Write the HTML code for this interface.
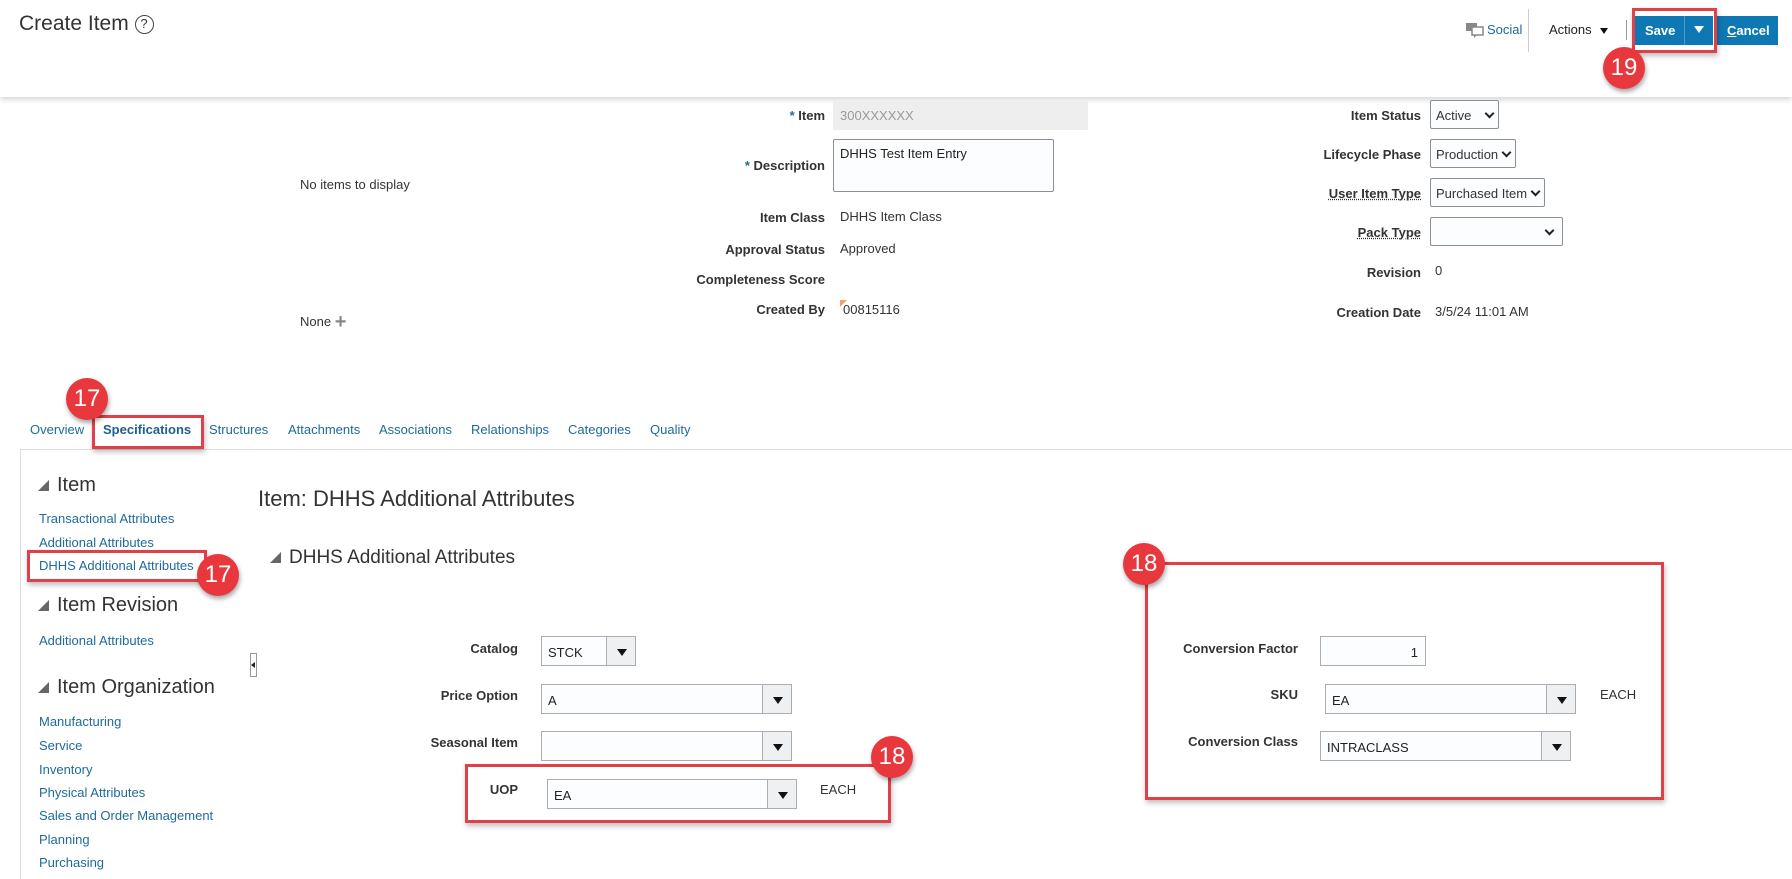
<!DOCTYPE html>
<html><head><meta charset="utf-8"><style>
*{margin:0;padding:0;box-sizing:border-box}
body{width:1792px;height:871px;background:#fff;font-family:"Liberation Sans",Arial,sans-serif;font-size:13px;color:#333;position:relative;overflow:hidden}
.a{position:absolute;white-space:nowrap}
.lbl{position:absolute;font-weight:bold;color:#333;text-align:right;white-space:nowrap}
.lk{color:#1f6a9b}
.sel{position:absolute;border:1px solid #8a9096;background:#fcfdfe;border-radius:2px}
.dd{position:absolute;border:1px solid #a9aeb3;background:#fcfdfe}
.dd .b{position:absolute;right:0;top:0;bottom:0;width:29px;background:#eef0f2;border-left:1px solid #a9aeb3}
.dd .b:after{content:"";position:absolute;left:10px;top:12px;border-left:5px solid transparent;border-right:5px solid transparent;border-top:7px solid #111}
.dd span{position:absolute;left:6px;top:8px;font-size:13px;color:#222}
.chev{position:absolute;right:5px;top:9px;width:7px;height:7px;border-right:2px solid #222;border-bottom:2px solid #222;transform:rotate(45deg)}
.badge{position:absolute;width:42px;height:42px;border-radius:50%;background:#e8383d;color:#fff;font-size:24px;text-align:center;line-height:42px;box-shadow:1px 3px 5px rgba(0,0,0,.35)}
.rbox{position:absolute;border:3px solid #e04048;box-shadow:1px 3px 5px rgba(0,0,0,.25)}
.tri{display:inline-block;width:0;height:0;border-left:11px solid transparent;border-bottom:11px solid #666;margin-right:8px}
</style></head><body>
<!-- header -->
<div class="a" style="left:0;top:0;width:1792px;height:97px;background:#fff;box-shadow:0 3px 5px rgba(0,0,0,.15)"></div>
<div class="a" style="left:19px;top:12px;font-size:21px;color:#333">Create Item <span style="display:inline-block;width:19px;height:19px;border:1.5px solid #444;border-radius:50%;font-size:13px;text-align:center;line-height:16px;vertical-align:2px">?</span></div>
<svg class="a" style="left:1466px;top:22px" width="18" height="16"><rect x="0" y="1" width="11" height="8" fill="#888"/><rect x="6" y="5" width="11" height="8" fill="#fff" stroke="#888" stroke-width="1.5"/><path d="M8 13 L8 16 L11 13Z" fill="#888"/></svg>
<div class="a lk" style="left:1487px;top:22px;font-size:13px">Social</div>
<div class="a" style="left:1528px;top:9px;width:1px;height:43px;background:#ccc"></div>
<div class="a" style="left:1549px;top:22px;color:#222">Actions</div>
<div class="a" style="left:1600px;top:28px;border-left:4px solid transparent;border-right:4px solid transparent;border-top:6px solid #111"></div>
<div class="a" style="left:1626px;top:20px;width:1px;height:20px;background:#999"></div>
<div class="a" style="left:1635px;top:16px;width:78px;height:29px;background:#0e78b4"></div>
<div class="a" style="left:1645px;top:23px;color:#fff;font-weight:bold">Save</div>
<div class="a" style="left:1684px;top:16px;width:1px;height:29px;background:#4a9bcb"></div>
<div class="a" style="left:1694px;top:26px;border-left:5px solid transparent;border-right:5px solid transparent;border-top:7px solid #fff"></div>
<div class="a" style="left:1716px;top:16px;width:62px;height:29px;background:#0e78b4"></div>
<div class="a" style="left:1727px;top:23px;color:#fff;font-weight:bold"><u>C</u>ancel</div>
<div class="rbox" style="left:1632px;top:8px;width:85px;height:45px"></div>
<div class="badge" style="left:1603px;top:47px">19</div>

<!-- top form -->
<div class="a" style="left:300px;top:177px">No items to display</div>
<div class="a" style="left:300px;top:311px">None <span style="color:#888;font-size:20px;font-weight:bold;vertical-align:-2px">+</span></div>
<div class="lbl" style="right:967px;top:108px"><span style="color:#1f6a9b">*</span> Item</div>
<div class="a" style="left:833px;top:100px;width:255px;height:30px;background:#eeeeee"></div>
<div class="a" style="left:840px;top:108px;color:#999">300XXXXXX</div>
<div class="lbl" style="right:967px;top:158px"><span style="color:#1f6a9b">*</span> Description</div>
<div class="sel" style="left:833px;top:139px;width:221px;height:53px"></div>
<div class="a" style="left:840px;top:146px;color:#222">DHHS Test Item Entry</div>
<div class="lbl" style="right:967px;top:210px">Item Class</div><div class="a" style="left:840px;top:209px">DHHS Item Class</div>
<div class="lbl" style="right:967px;top:242px">Approval Status</div><div class="a" style="left:840px;top:241px">Approved</div>
<div class="lbl" style="right:967px;top:272px">Completeness Score</div>
<div class="lbl" style="right:967px;top:302px">Created By</div>
<div class="a" style="left:840px;top:300px;border-top:7px solid #f0a070;border-right:7px solid transparent"></div>
<div class="a" style="left:843px;top:302px">00815116</div>

<div class="lbl" style="right:371px;top:108px">Item Status</div>
<div class="sel" style="left:1430px;top:100px;width:69px;height:29px"><span class="a" style="left:5px;top:7px">Active</span><i class="chev"></i></div>
<div class="lbl" style="right:371px;top:147px">Lifecycle Phase</div>
<div class="sel" style="left:1430px;top:139px;width:86px;height:29px"><span class="a" style="left:5px;top:7px">Production</span><i class="chev"></i></div>
<div class="lbl" style="right:371px;top:186px;text-decoration:underline dotted">User Item Type</div>
<div class="sel" style="left:1430px;top:178px;width:115px;height:29px"><span class="a" style="left:5px;top:7px">Purchased Item</span><i class="chev"></i></div>
<div class="lbl" style="right:371px;top:225px;text-decoration:underline dotted">Pack Type</div>
<div class="sel" style="left:1430px;top:217px;width:133px;height:29px"><i class="chev" style="right:9px"></i></div>
<div class="lbl" style="right:371px;top:265px">Revision</div><div class="a" style="left:1435px;top:263px">0</div>
<div class="lbl" style="right:371px;top:305px">Creation Date</div><div class="a" style="left:1435px;top:304px">3/5/24 11:01 AM</div>

<!-- tabs -->
<div class="a lk" style="left:30px;top:422px">Overview</div>
<div class="a" style="left:103px;top:422px;font-weight:bold;color:#1f5f8b">Specifications</div>
<div class="a lk" style="left:209px;top:422px">Structures</div>
<div class="a lk" style="left:288px;top:422px">Attachments</div>
<div class="a lk" style="left:379px;top:422px">Associations</div>
<div class="a lk" style="left:471px;top:422px">Relationships</div>
<div class="a lk" style="left:568px;top:422px">Categories</div>
<div class="a lk" style="left:650px;top:422px">Quality</div>
<div class="a" style="left:20px;top:449px;width:1772px;height:430px;border-top:1px solid #ddd;border-left:1px solid #ddd"></div>
<div class="rbox" style="left:92px;top:415px;width:112px;height:34px"></div>
<div class="badge" style="left:66px;top:378px">17</div>

<!-- left nav -->
<div class="a" style="left:38px;top:474px;font-size:20px;color:#333"><i class="tri"></i>Item</div>
<div class="a lk" style="left:39px;top:511px">Transactional Attributes</div>
<div class="a lk" style="left:39px;top:535px">Additional Attributes</div>
<div class="a lk" style="left:39px;top:558px">DHHS Additional Attributes</div>
<div class="rbox" style="left:27px;top:550px;width:180px;height:32px"></div>
<div class="badge" style="left:197px;top:554px">17</div>
<div class="a" style="left:38px;top:594px;font-size:20px;color:#333"><i class="tri"></i>Item Revision</div>
<div class="a lk" style="left:39px;top:633px">Additional Attributes</div>
<div class="a" style="left:38px;top:676px;font-size:20px;color:#333"><i class="tri"></i>Item Organization</div>
<div class="a lk" style="left:39px;top:714px">Manufacturing</div>
<div class="a lk" style="left:39px;top:738px">Service</div>
<div class="a lk" style="left:39px;top:762px">Inventory</div>
<div class="a lk" style="left:39px;top:785px">Physical Attributes</div>
<div class="a lk" style="left:39px;top:808px">Sales and Order Management</div>
<div class="a lk" style="left:39px;top:832px">Planning</div>
<div class="a lk" style="left:39px;top:855px">Purchasing</div>
<div class="a" style="left:250px;top:653px;width:7px;height:24px;border:1px solid #999;background:#fff"></div>
<div class="a" style="left:251px;top:662px;border-top:3px solid transparent;border-bottom:3px solid transparent;border-right:4px solid #222"></div>

<!-- main -->
<div class="a" style="left:258px;top:486px;font-size:22px;color:#333">Item: DHHS Additional Attributes</div>
<div class="a" style="left:270px;top:547px;font-size:19px;color:#333"><i class="tri"></i>DHHS Additional Attributes</div>

<div class="lbl" style="right:1274px;top:641px">Catalog</div>
<div class="dd" style="left:541px;top:636px;width:95px;height:30px"><span>STCK</span><div class="b"></div></div>
<div class="lbl" style="right:1274px;top:688px">Price Option</div>
<div class="dd" style="left:541px;top:684px;width:251px;height:30px"><span>A</span><div class="b"></div></div>
<div class="lbl" style="right:1274px;top:735px">Seasonal Item</div>
<div class="dd" style="left:541px;top:731px;width:251px;height:30px"><div class="b"></div></div>
<div class="lbl" style="right:1274px;top:782px">UOP</div>
<div class="dd" style="left:547px;top:779px;width:250px;height:30px"><span>EA</span><div class="b"></div></div>
<div class="a" style="left:820px;top:782px">EACH</div>
<div class="rbox" style="left:465px;top:764px;width:426px;height:59px"></div>
<div class="badge" style="left:871px;top:736px">18</div>

<div class="lbl" style="right:494px;top:641px">Conversion Factor</div>
<div class="dd" style="left:1320px;top:636px;width:106px;height:30px"><span style="left:auto;right:7px">1</span></div>
<div class="lbl" style="right:494px;top:687px">SKU</div>
<div class="dd" style="left:1325px;top:684px;width:251px;height:30px"><span>EA</span><div class="b"></div></div>
<div class="a" style="left:1600px;top:687px">EACH</div>
<div class="lbl" style="right:494px;top:734px">Conversion Class</div>
<div class="dd" style="left:1320px;top:731px;width:251px;height:30px"><span>INTRACLASS</span><div class="b"></div></div>
<div class="rbox" style="left:1145px;top:562px;width:519px;height:238px"></div>
<div class="badge" style="left:1123px;top:543px">18</div>
</body></html>
